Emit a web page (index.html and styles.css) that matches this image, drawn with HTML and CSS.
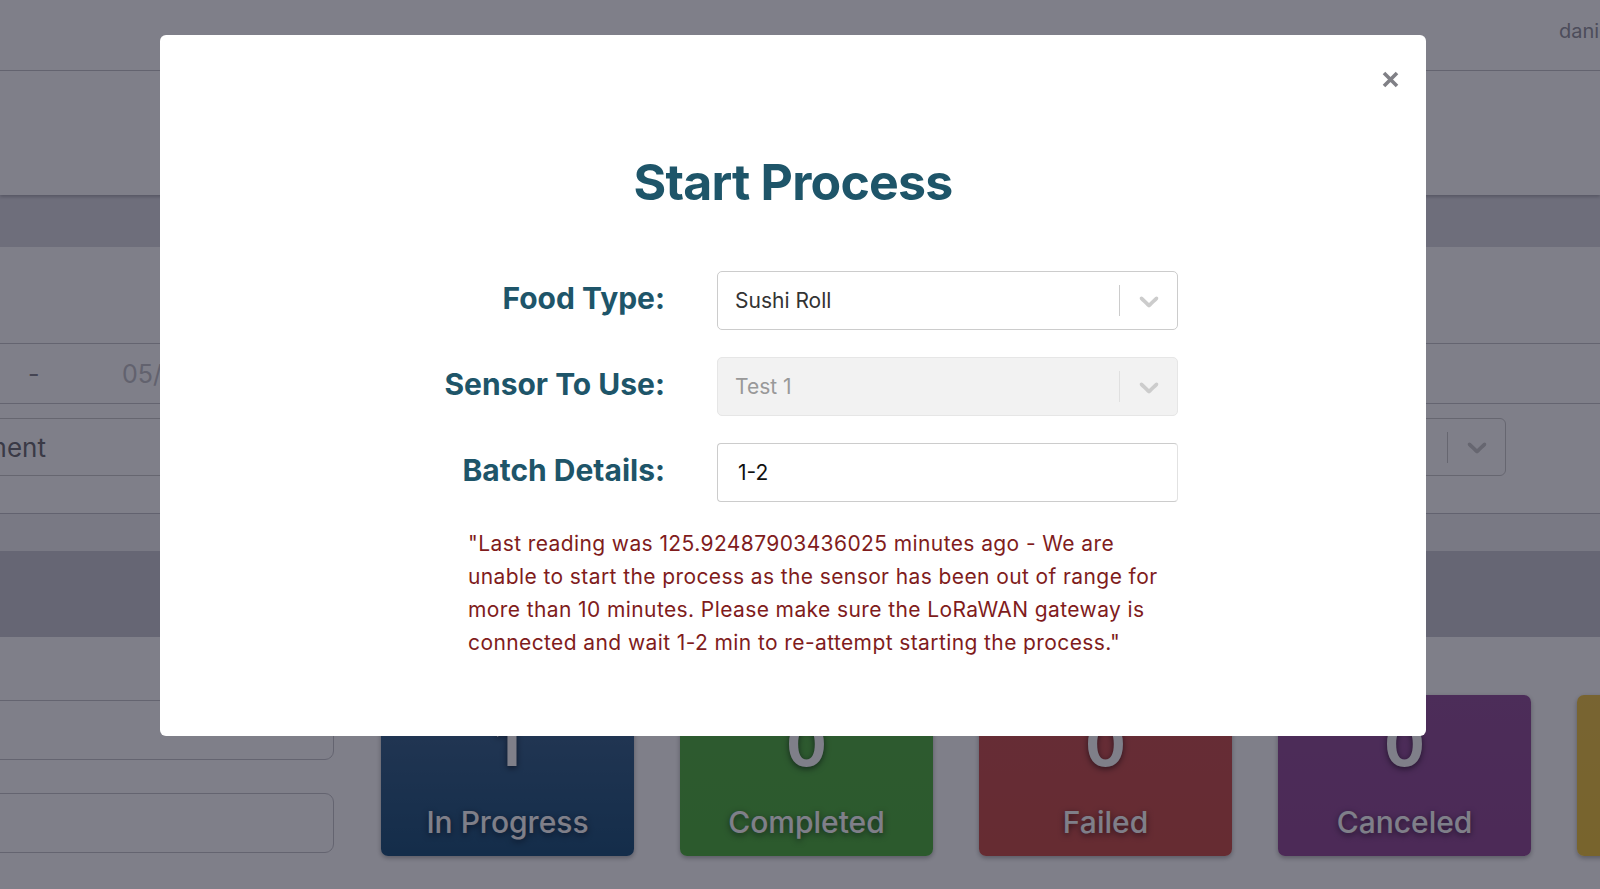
FILE: index.html
```html
<!DOCTYPE html>
<html lang="en">
<head>
    <meta charset="UTF-8">
    <meta name="viewport" content="width=device-width, initial-scale=1.0">
    <title>Start Process</title>
    <link rel="stylesheet" href="styles.css">
</head>
<body>
    <header class="topbar">
        <span class="user">daniel</span>
    </header>
    <section class="panel"></section>
    <div class="band"></div>

    <section class="filters">
        <div class="table-row">
            <span class="cell-dash">-</span>
            <span class="cell-date">05/18/2023</span>
        </div>
        <div class="filter-row">
            <div class="field field-left">Select Equipment</div>
            <div class="field field-right">
                <span class="field-value"></span>
                <span class="sep"></span>
                <span class="indicator">
                    <svg viewBox="0 0 20 20" width="32" height="32"><path d="M4.516 7.548c0.436-0.446 1.043-0.481 1.576 0l3.908 3.747 3.908-3.747c0.533-0.481 1.141-0.446 1.574 0 0.436 0.445 0.408 1.197 0 1.615-0.406 0.418-4.695 4.502-4.695 4.502-0.217 0.223-0.502 0.335-0.787 0.335s-0.57-0.112-0.789-0.335c0 0-4.287-4.084-4.695-4.502s-0.436-1.17 0-1.615z"/></svg>
                </span>
            </div>
        </div>
    </section>
    <div class="band-light"></div>
    <div class="band-dark"></div>

    <section class="summary">
        <div class="side-inputs">
            <div class="side-input"></div>
            <div class="side-input"></div>
        </div>
        <div class="cards">
            <div class="card card-progress">
                <div class="card-count">1</div>
                <div class="card-label">In Progress</div>
            </div>
            <div class="card card-completed">
                <div class="card-count">0</div>
                <div class="card-label">Completed</div>
            </div>
            <div class="card card-failed">
                <div class="card-count">0</div>
                <div class="card-label">Failed</div>
            </div>
            <div class="card card-canceled">
                <div class="card-count">0</div>
                <div class="card-label">Canceled</div>
            </div>
            <div class="card card-pending">
                <div class="card-count">0</div>
                <div class="card-label">Pending</div>
            </div>
        </div>
    </section>

    <!-- Start process modal -->
    <div class="overlay">
        <div class="modal">
            <button class="close" aria-label="Close">
                <svg viewBox="0 0 17 17" width="17" height="17"><path d="M2 2L15 15M15 2L2 15"/></svg>
            </button>
            <h1 class="modal-title">Start Process</h1>

            <div class="form">
                <label class="form-label">Food Type:</label>
                <div class="select">
                    <span class="select-value">Sushi Roll</span>
                    <span class="sep"></span>
                    <span class="indicator">
                        <svg viewBox="0 0 20 20" width="32" height="32"><path d="M4.516 7.548c0.436-0.446 1.043-0.481 1.576 0l3.908 3.747 3.908-3.747c0.533-0.481 1.141-0.446 1.574 0 0.436 0.445 0.408 1.197 0 1.615-0.406 0.418-4.695 4.502-4.695 4.502-0.217 0.223-0.502 0.335-0.787 0.335s-0.57-0.112-0.789-0.335c0 0-4.287-4.084-4.695-4.502s-0.436-1.17 0-1.615z"/></svg>
                    </span>
                </div>

                <label class="form-label">Sensor To Use:</label>
                <div class="select select-disabled">
                    <span class="select-value">Test 1</span>
                    <span class="sep"></span>
                    <span class="indicator">
                        <svg viewBox="0 0 20 20" width="32" height="32"><path d="M4.516 7.548c0.436-0.446 1.043-0.481 1.576 0l3.908 3.747 3.908-3.747c0.533-0.481 1.141-0.446 1.574 0 0.436 0.445 0.408 1.197 0 1.615-0.406 0.418-4.695 4.502-4.695 4.502-0.217 0.223-0.502 0.335-0.787 0.335s-0.57-0.112-0.789-0.335c0 0-4.287-4.084-4.695-4.502s-0.436-1.17 0-1.615z"/></svg>
                    </span>
                </div>

                <label class="form-label">Batch Details:</label>
                <input class="text-input" type="text" value="1-2">
            </div>

            <p class="error">"Last reading was 125.92487903436025 minutes ago - We are unable to start the process as the sensor has been out of range for more than 10 minutes. Please make sure the LoRaWAN gateway is connected and wait 1-2 min to re-attempt starting the process."</p>
        </div>
    </div>
</body>
</html>
```

FILE: styles.css
```css
body {
    font-family: Inter, "Noto Sans", sans-serif;
    margin: 0;
    padding: 0;
    width: 1600px;
    height: 889px;
    overflow: hidden;
    background-color: #ffffff;
}

/* dashboard behind the modal */
.topbar {
    height: 70px;
    border-bottom: 1px solid #c8c8cc;
    display: flex;
    align-items: center;
}
.user {
    margin-left: auto;
    width: 41px;
    white-space: nowrap;
    font-size: 20px;
    color: #9a9aa2;
    padding-bottom: 8px;
}
.panel {
    height: 124px;
    box-shadow: 0 2px 3px rgba(0, 0, 0, 0.2);
    position: relative;
}
.band {
    height: 52px;
    background-color: #dcdce2;
}
.filters {
    height: 267px;
    padding-top: 96px;
    box-sizing: border-box;
    border-bottom: 1px solid #c4c4ca;
}
.table-row {
    height: 59px;
    border-top: 1px solid #c8c8cc;
    border-bottom: 1px solid #c8c8cc;
    display: flex;
    align-items: center;
    font-size: 25px;
}
.cell-dash {
    width: 122px;
    padding-left: 28px;
    box-sizing: border-box;
    color: #8a8a92;
}
.cell-date {
    color: #c4c4c8;
}
.filter-row {
    margin-top: 14px;
    display: flex;
    justify-content: space-between;
}
.field {
    height: 58px;
    border: 1px solid #cccccc;
    border-radius: 6px;
    box-sizing: border-box;
    display: flex;
    align-items: center;
}
.field-left {
    margin-left: -190px;
    width: 900px;
    padding-left: 20px;
    font-size: 26px;
    color: #747478;
}
.field-right {
    width: 420px;
    margin-right: 94px;
}
.field-value {
    flex: 1;
}
.band-light {
    height: 37px;
    background-color: #f2f2f5;
}
.band-dark {
    height: 86px;
    background-color: #cdcdd4;
}
.summary {
    display: flex;
    align-items: flex-start;
    padding-top: 58px;
}
.side-inputs {
    width: 354px;
    margin-left: -20px;
    padding-top: 5px;
    display: flex;
    flex-direction: column;
    gap: 33px;
    flex-shrink: 0;
}
.side-input {
    height: 60px;
    border: 1px solid #c8c8cc;
    border-radius: 9px;
    box-sizing: border-box;
}
.cards {
    display: flex;
    gap: 46px;
    margin-left: 47px;
}
.card {
    width: 253px;
    height: 161px;
    flex-shrink: 0;
    border-radius: 7px;
    box-shadow: 0 2px 5px rgba(0, 0, 0, 0.3);
    display: flex;
    flex-direction: column;
    align-items: center;
    color: #ffffff;
    text-shadow: 0 2px 6px rgba(0, 0, 0, 0.55);
}
.card-count {
    padding-top: 19px;
    font-size: 60px;
    font-weight: 700;
    line-height: 60px;
}
.card-label {
    margin-top: 30px;
    font-size: 30px;
    font-weight: 500;
    line-height: 36px;
}
.card-progress { background: linear-gradient(#4a7096, #285a80); }
.card-completed { background: linear-gradient(#5cb44c, #58b446); }
.card-failed { background: linear-gradient(#cc5a5a, #cc5850); }
.card-canceled { background: linear-gradient(#985a9e, #98549a); }
.card-pending { background: linear-gradient(#f0c850, #f0c846); }

/* modal */
.overlay {
    position: fixed;
    inset: 0;
    background-color: rgba(0, 0, 20, 0.5);
}
.modal {
    position: relative;
    margin: 35px 0 0 160px;
    width: 1266px;
    height: 701px;
    box-sizing: border-box;
    padding-top: 117px;
    background-color: #ffffff;
    border-radius: 6px;
}
.close {
    position: absolute;
    top: 36px;
    right: 27px;
    padding: 0;
    border: none;
    background: transparent;
    cursor: pointer;
    line-height: 0;
}
.close path {
    stroke: #808086;
    stroke-width: 3.6;
}
.modal-title {
    margin: 0;
    text-align: center;
    font-size: 50px;
    font-weight: 700;
    line-height: 60px;
    letter-spacing: -0.8px;
    color: #1e5569;
}
.form {
    margin-top: 59px;
    padding-left: 160px;
    display: grid;
    grid-template-columns: 345px 461px;
    column-gap: 52px;
    row-gap: 27px;
    align-items: center;
}
.form-label {
    text-align: right;
    font-size: 30px;
    font-weight: 700;
    color: #1e5569;
    padding-bottom: 6px;
}
.select {
    height: 59px;
    border: 1px solid #cccccc;
    border-radius: 5px;
    box-sizing: border-box;
    display: flex;
    align-items: center;
}
.select-value {
    flex: 1;
    padding-left: 17px;
    font-size: 21px;
    color: #333333;
}
.sep {
    width: 1px;
    height: 31px;
    background-color: #cccccc;
}
.indicator {
    width: 57px;
    display: flex;
    justify-content: center;
    align-items: center;
}
.indicator svg {
    fill: #cccccc;
}
.select-disabled {
    background-color: #f2f2f2;
    border-color: #e6e6e6;
}
.select-disabled .select-value {
    color: #999999;
}
.select-disabled .sep {
    background-color: #e0e0e0;
}
.text-input {
    height: 59px;
    box-sizing: border-box;
    border: 1px solid #cccccc;
    border-right-color: #e2e2e2;
    border-radius: 4px;
    padding: 0 0 0 20px;
    font-family: Inter, "Noto Sans", sans-serif;
    font-size: 21px;
    color: #111111;
    outline: none;
}
.error {
    margin: 25px 0 0 308px;
    width: 697px;
    font-size: 21px;
    letter-spacing: 0.4px;
    line-height: 33px;
    color: #801c1c;
}
```
